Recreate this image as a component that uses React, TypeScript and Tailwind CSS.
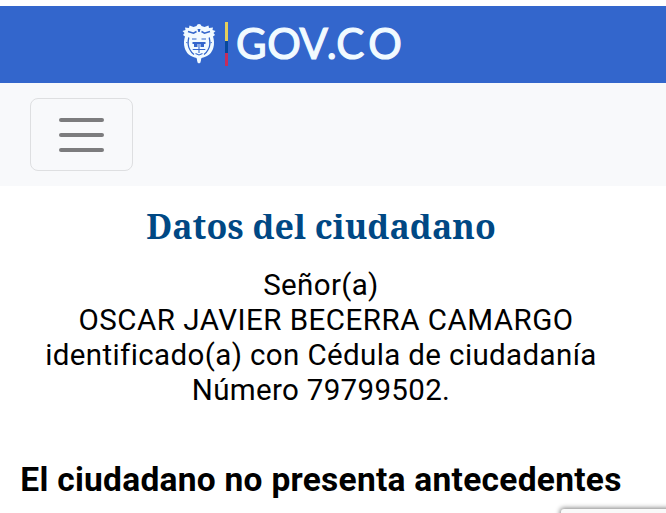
function Crest() {
  return (
    <svg className="block h-[42px] w-[34px]" viewBox="0 0 34 42">
      <g fill="#f1faff">
        <path d="M14.500 4q.5-2 2.500-2t2.500 2l3 1 4-1.500L27 6l4-.5-.5 2.500 3 1-2 2 1.500 2-2 1.500q2 6 .3 11.500-1.300 5-6.300 8-3 1.600-5.500 2l-1 3.200H15.500l-1-3.200q-2.500-.4-5.500-2-5-3-6.300-8Q1 20.500 3 14.500L1 13l1.500-2-2-2 3-1L3 5.500l4 .5.500-2.500 4 1.500z" />
        <path d="M15 36h4l-.5 4.500L17 41.500l-1.500-1z" />
      </g>
      <g fill="none" stroke="#3366cc">
        <path d="M6.800 15.500q-1.800 7.500 1 12 1.500 3 4.200 5M27.200 15.500q1.800 7.500-1 12-1.500 3-4.200 5" strokeWidth="1.300" />
        <path d="M6 9.500l5.500 1.700 3-1.700M28 9.500l-5.500 1.700-3-1.700" strokeWidth="1.600" />
        <path d="M4 20.500l1.700.3M30 20.500l-1.700.3" strokeWidth=".8" />
        <path d="M10 17h4.500M19.500 17H24M10.700 27.500h12.600M17 22v9M13.500 31.500l3.500 1.500 3.500-1.500" strokeWidth="1.100" />
      </g>
      <path d="M15.500 7h3l-.8 3h-1.400zM10.500 20h13v2h-13zM12 22h3.500v3H12zM18.500 22H22v3h-3.500z" fill="#3366cc" />
    </svg>
  );
}

function Brand() {
  return (
    <header className="flex h-[77px] items-start bg-[#3366cc] pl-[182px] pt-[16px]">
      <Crest />
      <div className="ml-[9px] flex h-[44px] w-[3px] flex-col">
        <span className="h-[19px] bg-[#e5cf5c]" />
        <span className="h-[12px] bg-[#07489b]" />
        <span className="h-[13px] bg-[#c52d5b]" />
      </div>
      <svg className="ml-[8px] block h-[50px] w-[170px] overflow-visible" viewBox="0 0 170 50" aria-label="GOV.CO">
        <text x="0 31.300 63.500 90.800 100.300 132.300" y="37" className="fill-[#f1faff] stroke-[#f1faff] font-['Lato',sans-serif] text-[42px]" strokeWidth="1.200">GOV.CO</text>
      </svg>
    </header>
  );
}

export default function App() {
  return (
    <div className="relative h-[513px] w-[666px] overflow-hidden bg-white pt-[6px] font-['Roboto',sans-serif] text-black">
      <Brand />
      <nav className="h-[103px] bg-[#f8f9fb] pl-[30px] pt-[15px]">
        <button className="flex h-[73px] w-[103px] flex-col items-center justify-center gap-[11px] rounded-[8px] border border-[#dedfe1]" aria-label="Menu">
          <span className="h-[4px] w-[45px] rounded-full bg-[#7c7c7e]" />
          <span className="h-[4px] w-[45px] rounded-full bg-[#7c7c7e]" />
          <span className="h-[4px] w-[45px] rounded-full bg-[#7c7c7e]" />
        </button>
      </nav>
      <main className="flex w-[642px] flex-col items-center whitespace-nowrap pt-[28px]">
        <h1 className="h-[54px] overflow-hidden font-['Noto_Serif','DejaVu_Serif_Condensed','DejaVu_Serif',serif] text-[34px] font-bold leading-[24px] text-[#004884]">Datos del ciudadano</h1>
        <p className="flex flex-col items-center text-[29.500px] leading-[35px]">
          <span className="tracking-[0.350px]">Señor(a)</span>
          <span className="pl-[10px] tracking-[0.500px]">OSCAR JAVIER BECERRA CAMARGO</span>
          <span className="tracking-[0.380px]">identificado(a) con Cédula de ciudadanía</span>
          <span className="tracking-[0.330px]">Número 79799502.</span>
        </p>
        <h2 className="mt-[52px] text-[33.500px] font-bold leading-[40px] tracking-[0.270px]">El ciudadano no presenta antecedentes</h2>
      </main>
      <div className="absolute left-[561px] top-[509px] h-[40px] w-[140px] rounded-[3px] bg-[#f9f9f9] shadow-[0_0_5px_1px_#808080]" />
    </div>
  );
}
